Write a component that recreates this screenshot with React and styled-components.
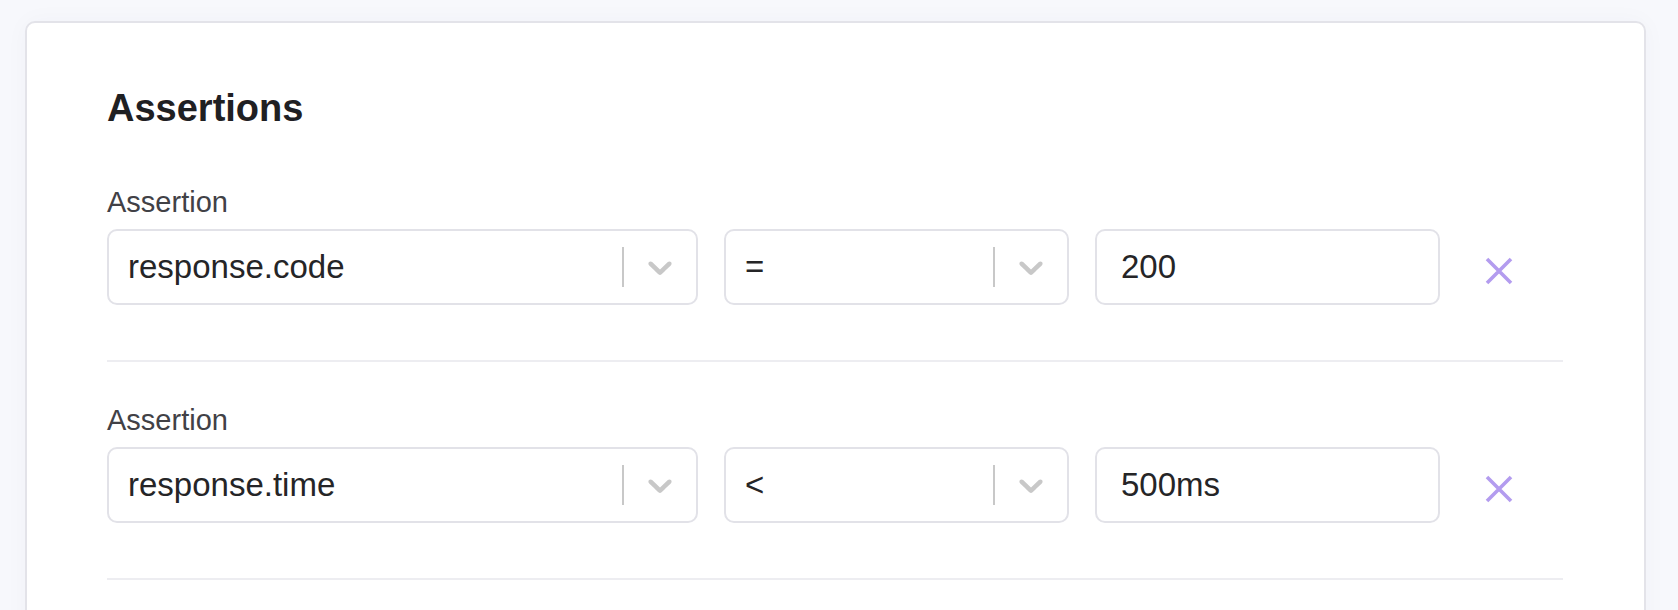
import React from 'react';
import styled, { createGlobalStyle } from 'styled-components';

const GlobalStyle = createGlobalStyle`
  html, body {
    margin: 0;
    padding: 0;
    background: #f7f8fc;
    font-family: "Liberation Sans", Arial, sans-serif;
  }
`;

const Page = styled.div`
  padding: 21px 32px 0 25px;
  overflow: hidden;
  height: 610px;
  box-sizing: border-box;
`;

const Card = styled.section`
  background: #fff;
  border: 2px solid #e3e3e9;
  border-radius: 10px;
  padding: 62px 81px 80px 80px;
  box-shadow: 0 0 24px rgba(40, 40, 80, 0.03);
`;

const Heading = styled.h2`
  margin: 0 0 53px 0;
  font-size: 38px;
  line-height: 46px;
  font-weight: 700;
  color: #1f2023;
`;

const Assertion = styled.div`
  padding-bottom: 55px;
  border-bottom: 2px solid #ededf1;
  margin-bottom: 40px;
`;

const Label = styled.label`
  display: block;
  font-size: 29px;
  line-height: 36px;
  color: #414146;
  margin-bottom: 9px;
`;

const Row = styled.div`
  display: grid;
  grid-template-columns: 591px 345px 345px 1fr;
  column-gap: 26px;
  align-items: center;
`;

const Control = styled.div`
  display: flex;
  align-items: center;
  height: 76px;
  box-sizing: border-box;
  border: 2px solid #e2e2e8;
  border-radius: 10px;
  background: #fff;
`;

const Value = styled.div`
  flex: 1;
  padding-left: ${p => (p.$input ? '24px' : '19px')};
  font-size: 33px;
  color: #252527;
  white-space: nowrap;
`;

const Separator = styled.span`
  width: 2px;
  height: 40px;
  background: #c8c8c8;
`;

const Indicator = styled.span`
  display: flex;
  align-items: center;
  padding: 0 16px;
  color: #c8c8c8;
`;

const Remove = styled.button`
  justify-self: start;
  margin: 8px 0 0 19px;
  padding: 0;
  border: none;
  background: none;
  display: flex;
  cursor: pointer;
`;

function Chevron() {
  return (
    <svg width="40" height="40" viewBox="0 0 20 20" fill="currentColor">
      <path d="M4.516 7.548c0.436-0.446 1.043-0.481 1.576 0l3.908 3.747 3.908-3.747c0.533-0.481 1.141-0.446 1.574 0 0.436 0.445 0.408 1.197 0 1.615-0.406 0.418-4.695 4.502-4.695 4.502-0.217 0.223-0.502 0.335-0.787 0.335s-0.57-0.112-0.789-0.335c0 0-4.287-4.084-4.695-4.502s-0.436-1.17 0-1.615z" />
    </svg>
  );
}

function Cross() {
  return (
    <svg width="28" height="28" viewBox="0 0 28 28">
      <path d="M2 2L26 26M26 2L2 26" stroke="#b39cef" strokeWidth="3.6" />
    </svg>
  );
}

function Select({ value }) {
  return (
    <Control>
      <Value>{value}</Value>
      <Separator />
      <Indicator><Chevron /></Indicator>
    </Control>
  );
}

const assertions = [
  { field: 'response.code', op: '=', target: '200' },
  { field: 'response.time', op: '<', target: '500ms' },
];

export default function App() {
  return (
    <>
      <GlobalStyle />
      <Page>
        <Card>
          <Heading>Assertions</Heading>
          {assertions.map(a => (
            <Assertion key={a.field}>
              <Label>Assertion</Label>
              <Row>
                <Select value={a.field} />
                <Select value={a.op} />
                <Control>
                  <Value $input>{a.target}</Value>
                </Control>
                <Remove aria-label="Remove assertion"><Cross /></Remove>
              </Row>
            </Assertion>
          ))}
        </Card>
      </Page>
    </>
  );
}
